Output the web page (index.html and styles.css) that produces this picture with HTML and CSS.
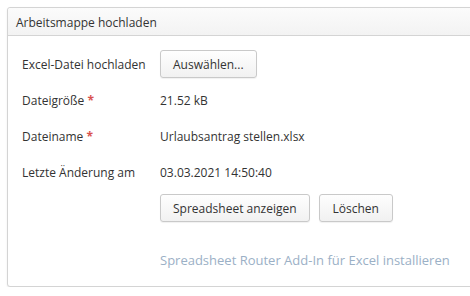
FILE: index.html
```html
<!DOCTYPE html>
<html lang="de">
<head>
  <meta charset="UTF-8" />
  <meta name="viewport" content="width=device-width, initial-scale=1.0" />
  <title>Arbeitsmappe hochladen</title>
  <link rel="stylesheet" href="styles.css">
</head>
<body>
  <div class="panel">
    <div class="panel-header">Arbeitsmappe hochladen</div>
    <div class="panel-body">
      <div class="form-grid">
        <div class="label">Excel-Datei hochladen</div>
        <div class="value"><button class="btn">Auswählen...</button></div>

        <div class="label">Dateigröße <span class="req">*</span></div>
        <div class="value">21.52 kB</div>

        <div class="label">Dateiname <span class="req">*</span></div>
        <div class="value">Urlaubsantrag stellen.xlsx</div>

        <div class="label">Letzte Änderung am</div>
        <div class="value">03.03.2021 14:50:40</div>

        <div class="label"></div>
        <div class="value actions">
          <button class="btn">Spreadsheet anzeigen</button>
          <button class="btn btn-wide">Löschen</button>
        </div>
      </div>
      <a class="addin-link" href="#">Spreadsheet Router Add-In für Excel installieren</a>
    </div>
  </div>
</body>
</html>
```

FILE: styles.css
```css
html, body {
  overflow: hidden;
}
body {
  font-family: 'Open Sans', sans-serif;
  font-size: 12px;
  color: #333;
  background: #fff;
  margin: 0;
  padding: 7px 0 0 7px;
}
.panel {
  width: 480px;
  height: 280px;
  box-sizing: border-box;
  border: 1px solid #d4d4d4;
  border-radius: 3px;
  box-shadow: 0 1px 2px rgba(0, 0, 0, 0.08);
  background: #fff;
}
.panel-header {
  height: 28px;
  box-sizing: border-box;
  padding: 6px 8px 0;
  background: linear-gradient(#fbfbfb, #f3f3f3);
  border-bottom: 1px solid #d4d4d4;
  border-radius: 3px 3px 0 0;
}
.panel-body {
  padding: 14px 14px 0;
}
.form-grid {
  display: grid;
  grid-template-columns: 138px 1fr;
  grid-auto-rows: 28px;
  row-gap: 8px;
  align-items: center;
  font-size: 12px;
}
.label {
  color: #333;
}
.req {
  color: #d9534f;
  font-weight: bold;
}
.actions {
  display: flex;
  gap: 9px;
}
.btn {
  font-family: 'Open Sans', sans-serif;
  font-size: 12px;
  color: #333;
  height: 28px;
  padding: 0 12px;
  background: linear-gradient(#fefefe, #f1f1f1);
  border: 1px solid #c9c9c9;
  border-radius: 3px;
  box-shadow: 0 1px 1px rgba(0, 0, 0, 0.06);
  cursor: pointer;
}
.btn-wide {
  padding: 0 13px;
}
.addin-link {
  display: block;
  margin: 29px 0 0 138px;
  font-size: 13px;
  color: #9bb0c6;
  text-decoration: none;
}
```
